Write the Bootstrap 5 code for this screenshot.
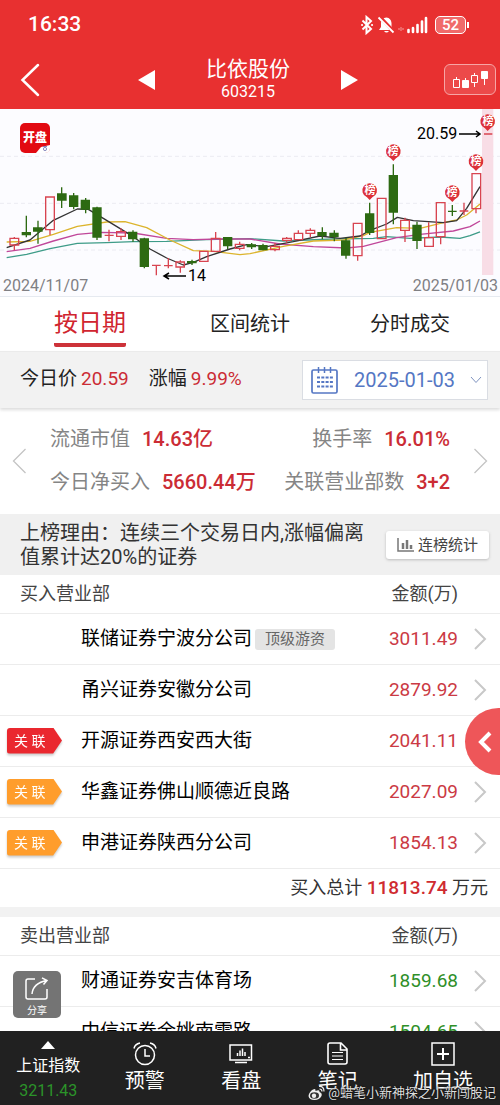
<!DOCTYPE html>
<html lang="zh-CN">
<head>
<meta charset="utf-8">
<meta name="viewport" content="width=device-width, initial-scale=1">
<title>比依股份 603215</title>
<link href="https://cdn.jsdelivr.net/npm/bootstrap@5.3.0/dist/css/bootstrap.min.css" rel="stylesheet">
<style>
  body { font-family: Roboto, "Noto Sans CJK SC", sans-serif; color: #222; background: #fff; }
  svg { display: block; flex: none; }
  a { color: inherit; text-decoration: none; }
  .top { background: #e83030; color: #fff; }
  .status { height: 50px; padding: 0 30px 0 28px; font-size: 21px; font-weight: 500; }
  .battery { width: 31px; height: 18px; border: 1px solid #fff; border-radius: 5px; background: #f06a6a; font-size: 15px; line-height: 16px; }
  .titlebar { height: 59px; }
  .side { flex: 1 1 0; }
  .switcher { width: 220px; }
  .stock { font-size: 21px; line-height: 24px; }
  .code { font-size: 16px; line-height: 22px; }
  .kbtn { width: 52px; height: 31px; border: 1px solid #f7a5a5; border-radius: 6px; background: #ec4a4a; }
  .body-scroll { overflow-y: auto; scrollbar-width: none; }
  .body-scroll::-webkit-scrollbar { display: none; }
  .chart { background: #fcfcff; border-bottom: 1px solid #e6eaf0; }
  .chart svg { overflow: visible; width: 100%; height: auto; }
  .dates { font-size: 16px; line-height: 20px; color: #808084; padding: 0 2px 0 3px; }
  .tabs { height: 54px; padding: 0 10px; font-size: 20px; }
  .tabs a { flex: 1 1 0; display: flex; justify-content: center; }
  .tabs span { display: block; line-height: 54px; }
  .tabs .on span { color: #d0252f; font-size: 24px; height: 50px; line-height: 52px; border-bottom: 4px solid #cd3239; border-radius: 2px; }
  .pricebar { height: 57px; background: #f2f2f2; padding: 0 12px 0 20px; font-size: 19px; box-shadow: inset 0 1px 0 #ebebeb, 0 2px 3px #ddd; position: relative; }
  .up { color: #cb2c35; }
  .datebox { width: 186px; height: 40px; background: #fff; border: 1px solid #dadde3; padding: 0 5px 0 8px; }
  .datebox select { appearance: none; border: 0; background: none; color: #5577c4; font-size: 20px; padding: 0; width: 104px; margin-left: 16px; }
  .stats { height: 106px; padding: 0 12px; font-size: 20px; line-height: 43px; color: #858585; }
  .stats .up { font-weight: 500; margin-left: 12px; }
  .reason { background: #f0f0f0; height: 61px; padding: 0 11px 0 20px; font-size: 20px; line-height: 24px; color: #333; gap: 18px; }
  .statbtn { width: 103px; height: 28px; border: 0; border-radius: 3px; background: #fff; font-size: 15px; color: #444; box-shadow: 0 1px 3px #bbb; padding: 0; gap: 3px; }
  .seats { width: 100%; margin: 0; font-size: 19px; line-height: 24px; table-layout: fixed; }
  .seats td, .seats th { padding: 0; vertical-align: middle; }
  .seats thead th { height: 38px; font-size: 18px; font-weight: 400; color: #444; }
  .seats thead th:first-child { padding-left: 20px; }
  .seats thead tr, .seats tbody tr { border-bottom: 1px solid #ececec; }
  .seats tbody td { height: 51px; color: #000; white-space: nowrap; }
  .seats tbody td.up { color: #cb3a44; }
  .seats tbody td.down { color: #2f8f28; }
  .c-tag { width: 81px; } .c-amt { width: 90px; } .c-go { width: 42px; }
  .seats tfoot td { height: 39px; font-size: 18px; color: #333; padding-right: 12px; }
  .seats tfoot b { font-size: 19px; font-weight: 500; color: #cf2b30; }
  .gap-line { height: 10px; background: #f2f2f2; }
  .tagwrap { filter: drop-shadow(0 2px 1px #ccc); margin-left: 7px; width: 55px; }
  .rel { display: block; height: 26px; line-height: 26px; padding-left: 7px; font-size: 14px; color: #fff; background: #ff9d2c; border-radius: 3px 0 0 3px; clip-path: polygon(0 0, 84% 0, 100% 50%, 84% 100%, 0 100%); }
  .rel.strong { background: #ea282f; }
  .hot { display: inline-block; background: #e4e4e4; color: #666; border-radius: 3px; font-size: 15px; line-height: 21px; padding: 0 10px; margin-left: 3px; vertical-align: 1px; }
  .drawer { position: absolute; right: 0; top: 65%; width: 35px; height: 67px; border: 0; border-radius: 34px 0 0 34px; background: #ee5659; padding: 0 0 0 11px; }
  .share { position: absolute; left: 13px; bottom: 13px; width: 48px; height: 47px; border: 0; border-radius: 5px; background: #747474; color: #fff; font-size: 10px; line-height: 14px; padding: 6px 0 0; }
  .dock { background: #212121; color: #fff; height: 74px; flex: none; font-size: 20px; position: relative; }
  .dock a { flex: 0 0 19.3%; display: flex; flex-direction: column; align-items: center; padding-top: 11px; line-height: 26px; gap: 2px; }
  .dock a:nth-of-type(5) { flex: 1 1 0; }
  .dock .index { font-size: 16px; gap: 0; line-height: 25px; padding-top: 10px; }
  .down-dark { color: #2b9329; }
  .credit { position: absolute; right: 4px; bottom: 3px; font-size: 13px; line-height: 18px; color: #ddd; gap: 3px; text-shadow: 0 0 2px #000; }
</style>
</head>
<body>
<div class="d-flex flex-column vh-100">
  <header class="top">
    <div class="status d-flex justify-content-between align-items-center">
      <span>16:33</span>
      <div class="d-flex align-items-center">
        <svg width="76" height="20" viewBox="0 0 76 20">
          <path d="M3.500 5.500l8.500 8.500-4.500 4V2L12 6l-8.500 8.500" fill="none" stroke="#fff" stroke-width="2"/>
          <path d="M3 10h.1M13 10h.1" stroke="#fff" stroke-width="2" stroke-linecap="round"/>
          <path d="M20 15l2-3V8q0-5 5.500-5.500Q32 3 32.500 8v4l2 3zM25 16h5q-2.500 3-5 0z" fill="#fff"/>
          <path d="M20.500 1.500l14 15" stroke="#e83030" stroke-width="3.500"/><path d="M19.500 2.500l15 15" stroke="#fff" stroke-width="1.800"/>
          <path d="M42 12v4M40 13v2M44 13v2" stroke="#f59a9a"/>
          <path d="M49.500 15v2M54 13v4M58.500 10v7M63 6.500V17M67 3V17" stroke="#fff" stroke-width="2.600" stroke-linecap="round"/>
        </svg>
        <span class="battery text-center">52</span>
        <svg width="4" height="8"><path d="M2 1v6" stroke="#fff" stroke-width="2"/></svg>
      </div>
    </div>
    <div class="titlebar d-flex align-items-center">
      <div class="side"><button class="btn p-0 border-0 ms-3" aria-label="返回"><svg width="28" height="36" viewBox="0 0 28 36"><path d="M22 3L6.500 18 22 33" fill="none" stroke="#fff" stroke-width="2.500" stroke-linecap="round"/></svg></button></div>
      <div class="switcher d-flex justify-content-between align-items-center">
        <button class="btn p-0 border-0" aria-label="上一只"><svg width="17" height="20"><path d="M17 0v20L0 10z" fill="#fff"/></svg></button>
        <div class="text-center"><div class="stock">比依股份</div><div class="code">603215</div></div>
        <button class="btn p-0 border-0" aria-label="下一只"><svg width="17" height="20"><path d="M0 0v20l17-10z" fill="#fff"/></svg></button>
      </div>
      <div class="side d-flex justify-content-end pe-1">
        <button class="kbtn p-0" aria-label="K线"><svg width="50" height="29" viewBox="0 0 50 29"><g stroke="#fff" fill="none"><path d="M8.500 14.500h6v8h-6zM11.500 12v2.500M20.500 13v3M26.500 10.500h6v7h-6zM29.500 8v2.500M29.500 17.500V22M39.500 14v6"/><path d="M17.500 15.500h6v7h-6zM36.500 6.500h6v7h-6z" fill="#fff"/></g></svg></button>
      </div>
    </div>
  </header>

  <div class="position-relative flex-fill overflow-hidden">
  <main class="body-scroll h-100">
    <section class="chart">
      <svg viewBox="0 0 500 167" role="img" aria-label="日K线">
        <g transform="scale(.33333) translate(0 -12)" fill="none" stroke-width="3">
          <path d="M0 154H1500M0 295H1500M0 435H1500" stroke="#ebebf2" stroke-dasharray="12 9"/>
          <path d="M1446 12h34v498h-34z" fill="#f8dde6"/>
          <g stroke-linejoin="round" stroke-width="4">
            <path stroke="#3e9c88" d="M20 458L80 448 150 431 232 415 320 413 400 410 500 409 620 404 750 401 850 408 1000 402 1120 400 1160 395 1230 400 1320 396 1380 400 1410 392 1440 381"/>
            <path stroke="#c0479a" d="M20 440L90 430 160 408 232 388 300 382 400 384 500 400 580 404 660 402 750 402 840 417 940 425 1040 429 1090 424 1190 398 1260 388 1360 378 1410 365 1440 348"/>
            <path stroke="#dcb42d" d="M20 411L90 409 160 388 232 364 320 351 375 350 440 368 510 405 580 437 640 439 720 449 750 446 850 424 940 408 1030 405 1090 392 1110 382 1190 368 1260 370 1330 353 1370 345 1400 330 1440 297"/>
            <path stroke="#333" d="M20 428L90 405 160 346 232 312 265 313 310 340 400 395 450 432 500 459 550 480 580 472 620 455 690 432 740 419 800 425 880 410 960 393 1020 400 1080 393 1110 376 1160 357 1192 337 1240 347 1330 353 1370 347 1400 310 1440 245"/>
          </g>
          <g stroke="#d84450" stroke-width="4">
            <path d="M43 396v4M43 420v16M150 374v16M327 374v35M314 391h27M363 370v10M363 394v11M456 481h26M469 481v30M505 459v31M492 482h26M541 466v5M541 486v17M647 381v19M719 410v8M719 430v6M825 414v10M825 434v5M860 396v4M860 406v7M895 376v9M931 370v6M931 385v11M1073 452v15M1215 338v8M1215 376v35M1286 352v46M1322 395v23M1392 293v37M1379 318h26M1428 311v14M1452 87h25"/>
            <path d="M30 400h26v20h-26zM137 276h26v98h-26zM350 380h26v14h-26zM528 471h25v15h-25zM599 439h25v30h-25zM634 400h26v39h-26zM706 418h26v12h-26zM812 424h26v10h-26zM848 400h26v6h-26zM883 385h25v19h-25zM918 376h26v9h-26zM1060 355h26v97h-26zM1132 280h26v121h-26zM1202 346h26v30h-26zM1274 398h26v26h-26zM1309 293h26v102h-26zM1416 206h26v105h-26z"/>
          </g>
          <path stroke="#2d6a12" stroke-width="4" d="M79 332v65M114 347v69M185 247v62M221 264v49M257 279v46M291 305v100M399 376v34M433 398v92M576 464v16M683 396v36M755 414v18M789 416v20M967 367v36M1003 376v33M1038 398v63M1109 293v97M1180 178v180M1251 350v82M1357 300v33M1344 319h26"/>
          <path fill="#2d6a12" d="M65 381h28v10h-28zM99 367h29v13h-29zM171 265h29v22h-29zM207 271h28v35h-28zM242 284h28v30h-28zM277 307h28v91h-28zM384 380h28v23h-28zM419 400h28v86h-28zM561 468h29v7h-29zM669 396h28v28h-28zM740 418h28v9h-28zM775 420h28v16h-28zM952 381h28v12h-28zM988 383h28v13h-28zM1023 406h28v46h-28zM1095 325h28v59h-28zM1166 210h28v113h-28zM1237 359h28v49h-28z"/>
          <path fill="#dc3039" d="M1109 285l-8-8a22 22 0 1 1 16 0zM1180 168l-8-8a22 22 0 1 1 16 0zM1357 291l-8-8a22 22 0 1 1 16 0zM1428 198l-8-8a22 22 0 1 1 16 0zM1463 78l-8-8a22 22 0 1 1 16 0z"/>
        </g>
        <g fill="#fff" font-size="11" font-weight="700" text-anchor="middle">
          <text x="370" y="85">榜</text><text x="393" y="46">榜</text><text x="452" y="87">榜</text><text x="476" y="56">榜</text><text x="488" y="16">榜</text>
        </g>
        <g fill="#000" font-size="16"><text x="417" y="30">20.59</text><text x="188" y="172">14</text></g>
        <path d="M459 25h21M476 22l4 3-4 3M186 167h-21M169 164l-5 3 5 3" fill="none" stroke="#000" stroke-width="1.500"/>
        <rect x="20" y="14" width="30" height="30" rx="5" fill="#e20a12"/>
        <path d="M36 44l5-6 9-2v3q0 5-5 5z" fill="#fff"/>
        <g fill="none" stroke="#6d6fae" stroke-width=".8"><circle cx="45" cy="40" r="1.600"/><path d="M43 37.500h4"/></g>
        <text x="35" y="33" fill="#fff" font-size="12" font-weight="900" text-anchor="middle">开盘</text>
      </svg>
      <div class="dates d-flex justify-content-between"><span>2024/11/07</span><span>2025/01/03</span></div>
    </section>

    <nav class="tabs d-flex">
      <a href="#" class="on"><span>按日期</span></a><a href="#"><span>区间统计</span></a><a href="#"><span>分时成交</span></a>
    </nav>

    <section class="pricebar d-flex align-items-center justify-content-between">
      <div class="d-flex"><span>今日价</span><span class="up ms-1">20.59</span><span class="ms-3 ps-1">涨幅</span><span class="up ms-1">9.99%</span></div>
      <label class="datebox d-flex align-items-center">
        <svg width="27" height="28" viewBox="0 0 27 28"><g fill="none" stroke="#5577c4"><rect x="1" y="4" width="25" height="23" rx="1.500" stroke-width="1.700"/><path d="M7.500 1v6M13.500 1v6M19.500 1v6" stroke-width="1.500"/><path d="M6 11.500h16M6 16h16M6 20.500h16" stroke-width="2" stroke-dasharray="3 1.300"/></g></svg>
        <select aria-label="日期"><option>2025-01-03</option></select>
        <svg class="ms-auto" width="12" height="8"><path d="M1 1l5 5.500L11 1" fill="none" stroke="#7f94c0"/></svg>
      </label>
    </section>

    <section class="stats d-flex align-items-center">
      <svg width="14" height="26"><path d="M13.500 1L1.500 13l12 12" fill="none" stroke="#c4c4c4" stroke-width="1.300"/></svg>
      <div class="flex-fill px-4">
        <div class="d-flex justify-content-between"><div>流通市值<span class="up">14.63亿</span></div><div>换手率<span class="up">16.01%</span></div></div>
        <div class="d-flex justify-content-between"><div>今日净买入<span class="up">5660.44万</span></div><div>关联营业部数<span class="up">3+2</span></div></div>
      </div>
      <svg width="14" height="26"><path d="M.5 1l12 12-12 12" fill="none" stroke="#c4c4c4" stroke-width="1.300"/></svg>
    </section>

    <section class="reason d-flex align-items-center">
      <div class="flex-fill">上榜理由：连续三个交易日内,涨幅偏离值累计达20%的证券</div>
      <button class="statbtn d-flex align-items-center justify-content-center flex-shrink-0"><svg width="18" height="14"><path d="M1 0v13h16" fill="none" stroke="#777" stroke-width="1.500"/><path d="M6 5v6M10 2v9M14 7v4" stroke="#777" stroke-width="2.500"/></svg>连榜统计</button>
    </section>

    <table class="seats">
      <colgroup><col class="c-tag"><col><col class="c-amt"><col class="c-go"></colgroup>
      <thead><tr><th colspan="2">买入营业部</th><th class="text-end">金额(万)</th><th></th></tr></thead>
      <tbody>
        <tr><td></td><td>联储证券宁波分公司<span class="hot">顶级游资</span></td><td class="up text-end">3011.49</td><td><svg class="ms-3" width="13" height="22"><path d="M1 1l10 10L1 21" fill="none" stroke="#c8c8c8" stroke-width="2"/></svg></td></tr>
        <tr><td></td><td>甬兴证券安徽分公司</td><td class="up text-end">2879.92</td><td><svg class="ms-3" width="13" height="22"><path d="M1 1l10 10L1 21" fill="none" stroke="#c8c8c8" stroke-width="2"/></svg></td></tr>
        <tr><td><div class="tagwrap"><span class="rel strong">关 联</span></div></td><td>开源证券西安西大街</td><td class="up text-end">2041.11</td><td></td></tr>
        <tr><td><div class="tagwrap"><span class="rel">关 联</span></div></td><td>华鑫证券佛山顺德近良路</td><td class="up text-end">2027.09</td><td><svg class="ms-3" width="13" height="22"><path d="M1 1l10 10L1 21" fill="none" stroke="#c8c8c8" stroke-width="2"/></svg></td></tr>
        <tr><td><div class="tagwrap"><span class="rel">关 联</span></div></td><td>申港证券陕西分公司</td><td class="up text-end">1854.13</td><td><svg class="ms-3" width="13" height="22"><path d="M1 1l10 10L1 21" fill="none" stroke="#c8c8c8" stroke-width="2"/></svg></td></tr>
      </tbody>
      <tfoot><tr><td colspan="4" class="text-end">买入总计 <b>11813.74</b> 万元</td></tr></tfoot>
    </table>
    <div class="gap-line"></div>
    <table class="seats">
      <colgroup><col class="c-tag"><col><col class="c-amt"><col class="c-go"></colgroup>
      <thead><tr><th colspan="2">卖出营业部</th><th class="text-end">金额(万)</th><th></th></tr></thead>
      <tbody>
        <tr><td></td><td>财通证券安吉体育场</td><td class="down text-end">1859.68</td><td><svg class="ms-3" width="13" height="22"><path d="M1 1l10 10L1 21" fill="none" stroke="#c8c8c8" stroke-width="2"/></svg></td></tr>
        <tr><td></td><td>中信证券余姚南雷路</td><td class="down text-end">1504.65</td><td><svg class="ms-3" width="13" height="22"><path d="M1 1l10 10L1 21" fill="none" stroke="#c8c8c8" stroke-width="2"/></svg></td></tr>
      </tbody>
    </table>
  </main>
  <button class="drawer" aria-label="展开"><svg width="16" height="22"><path d="M14 2L5 11l9 9" fill="none" stroke="#fff" stroke-width="4"/></svg></button>
  <button class="share d-flex flex-column align-items-center"><svg width="24" height="23"><g fill="none" stroke="#fff" stroke-width="1.500"><path d="M10 2H3Q1 2 1 4v16q0 2 2 2h17q2 0 2-2v-8"/><path d="M7 17Q8 6 22 3.500M17 .8l5 2.700-3.500 4"/></g></svg><span class="mt-1">分享</span></button>
  </div>

  <nav class="dock d-flex">
    <a href="#" class="index"><svg width="14" height="8"><path d="M7 0l7 8H0z" fill="#fff"/></svg><span class="mt-1">上证指数</span><span class="down-dark">3211.43</span></a>
    <a href="#"><svg width="24" height="24"><g fill="none" stroke="#fff" stroke-width="1.500"><circle cx="12" cy="13" r="9.500"/><path d="M12 7v7h5M1 6.500Q2 2 7 1M23 6.500Q22 2 17 1"/></g></svg>预警</a>
    <a href="#"><svg width="24" height="24"><g fill="none" stroke="#fff" stroke-width="1.500"><path d="M1 3h21.500v15H1zM6 20.500h12M8.500 14v-3M11 14V8.500M13.500 14V6.500M16 14v-4M19 15.500h2"/></g></svg>看盘</a>
    <a href="#"><svg width="24" height="24"><g fill="none" stroke="#fff" stroke-width="1.600"><path d="M4 1h11l6 6v13q0 2-2 2H4q-2 0-2-2V3q0-2 2-2zM14.500 1v7H21"/><path d="M6 10.500h11M6 14h11M6 17.500h11" stroke-width="1.200"/></g></svg>笔记</a>
    <a href="#"><svg width="24" height="24"><g fill="none" stroke="#fff"><path d="M1 1h22v22H1z" stroke-width="1.500"/><path d="M12 6v12M6 12h12" stroke-width="2"/></g></svg>加自选</a>
    <div class="credit d-flex align-items-center">
      <svg width="17" height="16" viewBox="0 0 17 16"><path d="M.5 11Q1 7 5 4.500q3-1.500 2.500 1.500Q12 4 11.500 7q3 1 2 4-2 4-7 4-5.500 0-6-4z" fill="#eee"/><ellipse cx="6.500" cy="10.500" rx="4.500" ry="3.200" fill="#333"/><circle cx="6" cy="10.800" r="2.200" fill="#eee"/><path d="M11 1.500q5-.5 5 5M11.500 4q2.500 0 2.500 2.500" fill="none" stroke="#eee" stroke-width="1.200"/></svg>
      <span>@蜡笔小新神探之小新闯股记</span>
    </div>
  </nav>
</div>
<script src="https://cdn.jsdelivr.net/npm/bootstrap@5.3.0/dist/js/bootstrap.bundle.min.js"></script>
</body>
</html>
